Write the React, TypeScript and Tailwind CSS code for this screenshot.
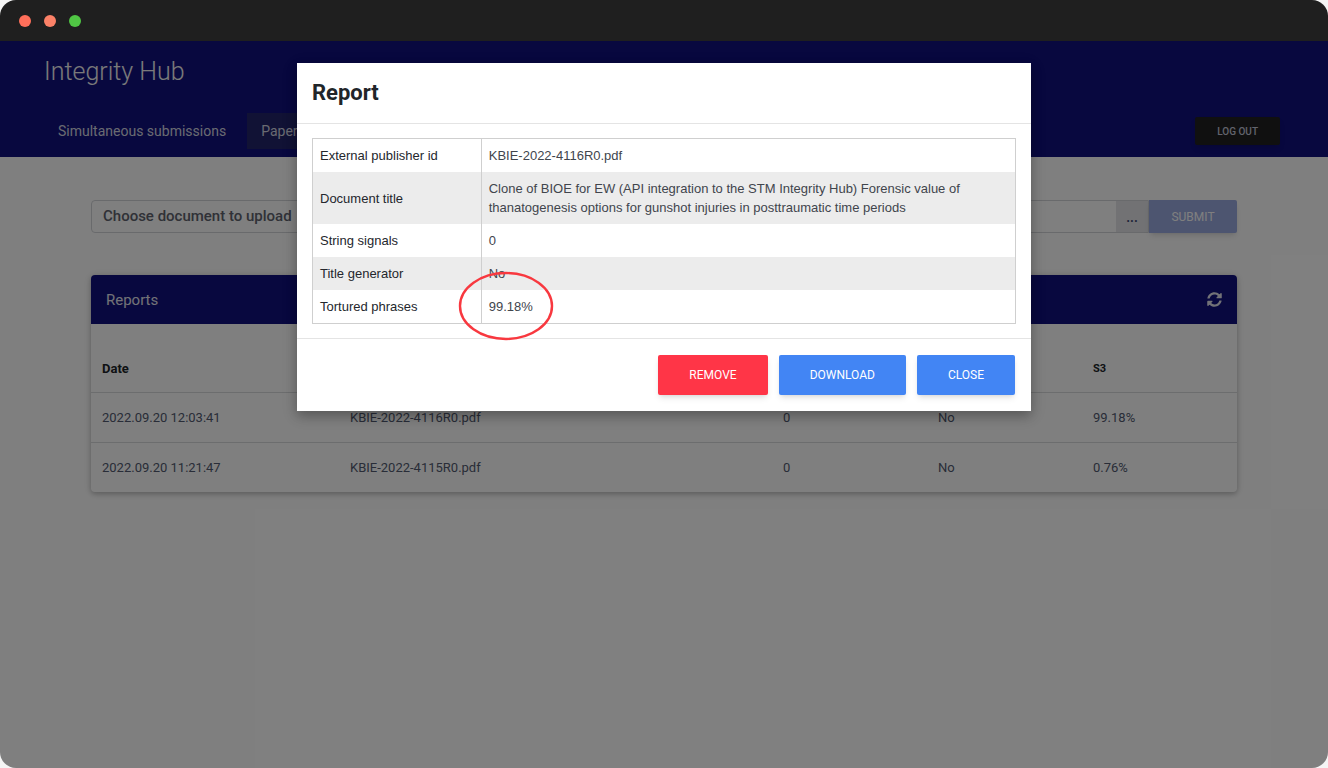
import { useState } from "react";
import { FaSyncAlt } from "react-icons/fa";

const reports = [
  { date: "2022.09.20 12:03:41", file: "KBIE-2022-4116R0.pdf", s1: "0", s2: "No", s3: "99.18%" },
  { date: "2022.09.20 11:21:47", file: "KBIE-2022-4115R0.pdf", s1: "0", s2: "No", s3: "0.76%" },
];

const details = [
  { label: "External publisher id", value: "KBIE-2022-4116R0.pdf" },
  {
    label: "Document title",
    value:
      "Clone of BIOE for EW (API integration to the STM Integrity Hub) Forensic value of thanatogenesis options for gunshot injuries in posttraumatic time periods",
  },
  { label: "String signals", value: "0" },
  { label: "Title generator", value: "No" },
  { label: "Tortured phrases", value: "99.18%", circled: true },
];

export default function App() {
  const [open, setOpen] = useState(true);

  return (
    <div className="min-h-screen bg-[#f5f5f5] font-['Roboto',sans-serif]">
      <div className="flex min-h-screen flex-col overflow-hidden rounded-2xl bg-white">
        <div className="flex h-[41px] shrink-0 items-center gap-[13px] bg-[#1f1f1f] px-[19px]">
          <span className="size-3 rounded-full bg-[#ff6f5a]" />
          <span className="size-3 rounded-full bg-[#fb8167]" />
          <span className="size-3 rounded-full bg-[#50c644]" />
        </div>

        <div className="relative flex-1">
          <SiteHeader />
          <main className="px-[91px] pt-[43px]">
            <UploadForm />
            <ReportsCard />
          </main>
          {open ? <ReportDialog onClose={() => setOpen(false)} /> : null}
        </div>
      </div>
    </div>
  );
}

function SiteHeader() {
  return (
    <header className="bg-[#10107e] pt-[13px] pr-12 pb-2 pl-11">
      <h1 className="text-[25px] leading-9 font-light text-[#f4f4f4]">Integrity Hub</h1>
      <div className="mt-[23px] flex items-center justify-between">
        <nav className="flex gap-[7px] text-[14px] leading-9 text-[#d4d6e2]">
          <a className="px-3.5" href="#simultaneous">
            Simultaneous submissions
          </a>
          <a className="bg-[#22246a] px-3.5" href="#paper">
            Paper
          </a>
        </nav>
        <button
          className="h-7 rounded-xs bg-[#212121] px-[22px] text-[10px] font-medium text-[#c4c8da] shadow-md"
          type="button"
        >
          LOG OUT
        </button>
      </div>
    </header>
  );
}

function UploadForm() {
  return (
    <form className="flex h-[33px]" onSubmit={(event) => event.preventDefault()}>
      <div className="flex flex-1 items-center rounded-l border border-[#d2d4d8] pl-[11px]">
        <label className="text-[15px] font-medium text-[#60636e]" htmlFor="document">
          Choose document to upload
        </label>
        <input className="ml-3 h-full min-w-0 flex-1 outline-none" id="document" readOnly type="text" />
        <button
          className="h-full w-8 bg-[#e4e5e9] text-sm font-medium text-[#3a4470]"
          aria-label="Browse"
          type="button"
        >
          ...
        </button>
      </div>
      <button
        className="w-[88px] rounded-r-xs bg-[#9aaae0] text-[12px] text-white shadow-md"
        type="submit"
      >
        SUBMIT
      </button>
    </form>
  );
}

function ReportsCard() {
  return (
    <section className="mt-[42px] overflow-hidden rounded shadow-[0_2px_5px_rgba(0,0,0,0.2),0_1px_10px_rgba(0,0,0,0.12)]">
      <div className="flex h-[49px] items-center justify-between bg-[#10107e] px-[15px] text-[#e4e5ef]">
        <h2 className="pt-px text-[15px]">Reports</h2>
        <button aria-label="Refresh" type="button">
          <FaSyncAlt className="size-[15px]" />
        </button>
      </div>
      <table className="w-full table-fixed text-left text-[13px] leading-5 text-[#525a70]">
        <colgroup>
          <col className="w-[248px]" />
          <col />
          <col className="w-[155px]" />
          <col className="w-[155px]" />
          <col className="w-[155px]" />
        </colgroup>
        <thead>
          <tr className="h-[68px] text-[#212529]">
            <th className="px-[11px] pt-[22px] font-bold">Date</th>
            <th aria-label="File" />
            <th aria-label="S1" />
            <th aria-label="S2" />
            <th className="px-[11px] pt-[22px] text-[11px] font-bold">S3</th>
          </tr>
        </thead>
        <tbody>
          {reports.map((report) => (
            <tr className="h-[50px] border-t border-[#d8dadd]" key={report.file}>
              <td className="px-[11px] pt-0.5">{report.date}</td>
              <td className="px-[11px] pt-0.5">{report.file}</td>
              <td className="px-[11px] pt-0.5">{report.s1}</td>
              <td className="px-[11px] pt-0.5">{report.s2}</td>
              <td className="px-[11px] pt-0.5">{report.s3}</td>
            </tr>
          ))}
        </tbody>
      </table>
    </section>
  );
}

function ReportDialog({ onClose }: { onClose: () => void }) {
  return (
    <div className="absolute inset-0 flex items-start justify-center bg-black/50 pt-[22px]">
      <div
        aria-labelledby="dialog-title"
        aria-modal="true"
        className="w-full max-w-[734px] bg-white shadow-[0_5px_11px_rgba(0,0,0,0.2),0_4px_15px_rgba(0,0,0,0.15)]"
        role="dialog"
      >
        <div className="border-b border-[#e4e4e4] px-[15px] py-[14px]">
          <h2 className="text-[22px] leading-8 font-bold text-[#212529]" id="dialog-title">
            Report
          </h2>
        </div>

        <div className="px-[15px] py-[14px]">
          <table className="w-full border border-[#cfcfcf] text-left font-['Liberation_Sans',Arial,sans-serif] text-[13px] leading-[19px]">
            <tbody>
              {details.map((row) => (
                <tr className="even:bg-[#ececec]" key={row.label}>
                  <th className="w-[24%] border-r border-[#cfcfcf] p-[7px] font-normal text-[#24272d]">
                    {row.label}
                  </th>
                  <td className="p-[7px] text-[#41454d]">
                    <span className="relative">
                      {row.value}
                      {row.circled ? <Circle /> : null}
                    </span>
                  </td>
                </tr>
              ))}
            </tbody>
          </table>
        </div>

        <div className="flex justify-end gap-[11px] border-t border-[#e4e4e4] px-4 py-4 text-[12px] text-white">
          <button className="h-10 rounded-xs bg-[#ff3547] px-[31px] shadow-md" type="button">
            REMOVE
          </button>
          <button className="h-10 rounded-xs bg-[#4285f4] px-[31px] shadow-md" type="button">
            DOWNLOAD
          </button>
          <button className="h-10 rounded-xs bg-[#4285f4] px-[31px] shadow-md" onClick={onClose} type="button">
            CLOSE
          </button>
        </div>
      </div>
    </div>
  );
}

// Hand-drawn style marker around the flagged score
function Circle() {
  return (
    <svg
      aria-hidden="true"
      className="pointer-events-none absolute top-1/2 left-1/2 h-[70px] w-24 max-w-none -translate-x-[53px] -translate-y-9"
      fill="none"
      viewBox="0 0 96 70"
    >
      <ellipse cx="48" cy="35" rx="46" ry="33" stroke="#f8383f" strokeWidth="2.4" />
    </svg>
  );
}
